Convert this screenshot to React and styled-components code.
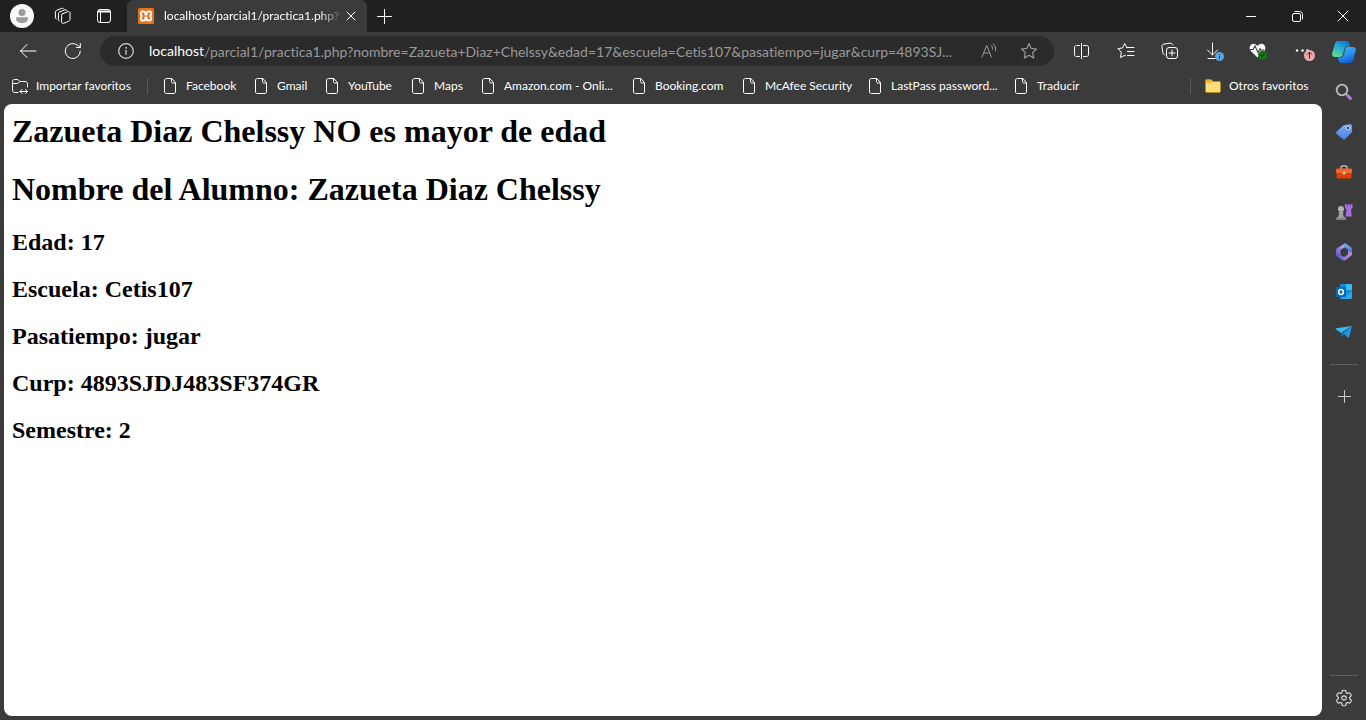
import React from 'react';
import styled, { createGlobalStyle, css } from 'styled-components';

const GlobalStyle = createGlobalStyle`
  * { box-sizing: border-box; }
  body { margin: 0; background: #3b3b3b; }
  button { font: inherit; color: inherit; background: none; border: 0; padding: 0; }
  svg { display: block; flex: none; }
`;

const uiFont = css`
  font-family: "Segoe UI", Lato, "Open Sans", sans-serif;
  font-variant-ligatures: none;
  font-size: 12px;
  line-height: 16px;
`;

const Browser = styled.div`
  ${uiFont}
  display: flex;
  flex-direction: column;
  min-height: 100vh;
  color: #fff;
`;

const TabStrip = styled.header`
  display: flex;
  align-items: center;
  height: 32px;
  padding-left: 2px;
  background: #202020;
`;

const StripTools = styled.div`
  display: flex;
  gap: 1px;
  margin-right: 3px;
`;

const IconButton = styled.button`
  display: flex;
  align-items: center;
  justify-content: center;
  flex: none;
  width: ${(p) => p.$w || 40}px;
  height: ${(p) => p.$h || 32}px;
`;

const Tab = styled.div`
  display: flex;
  align-items: center;
  width: 240px;
  height: 32px;
  padding: 0 4px 0 11px;
  background: #3b3b3b;
  border-radius: 6px 6px 0 0;
`;

const TabTitle = styled.button`
  display: flex;
  align-items: center;
  gap: 10px;
  flex: 1;
  min-width: 0;
  text-align: left;
`;

const FadedText = styled.span`
  flex: 1;
  white-space: nowrap;
  mask-image: linear-gradient(to right, #000 88%, rgba(0, 0, 0, 0.2) 100%);
`;

const WindowControls = styled.div`
  display: flex;
  margin-left: auto;
`;

const Body = styled.div`
  display: flex;
  flex: 1;
`;

const Main = styled.div`
  display: flex;
  flex-direction: column;
  flex: 1;
  min-width: 0;
  padding: 0 0 4px 4px;
`;

const Toolbar = styled.div`
  display: flex;
  align-items: center;
  height: 38px;
  padding: 0 2px 0 1px;
`;

const AddressBar = styled.div`
  display: flex;
  align-items: center;
  flex: 1;
  min-width: 0;
  height: 30px;
  margin: 0 10px 0 5px;
  padding: 0 5px 0 6px;
  border-radius: 15px;
  background: #2b2b2b;
  font-size: 14px;
`;

const Host = styled.label`
  margin-left: 3px;
`;

const UrlInput = styled.input`
  flex: 1;
  min-width: 0;
  height: 24px;
  padding: 0;
  border: 0;
  outline: 0;
  background: none;
  color: #999;
  font: inherit;
  font-variant-ligatures: none;
`;

const ToolbarActions = styled.div`
  display: flex;
  gap: 8px;
`;

const BookmarksBar = styled.nav`
  display: flex;
  align-items: center;
  height: 34px;
  padding: 0 14px 2px 8px;
`;

const Bookmark = styled.a`
  display: flex;
  align-items: center;
  gap: 8px;
  margin-right: 18px;
  color: #fff;
  text-decoration: none;
  white-space: nowrap;
`;

const BookmarkLabel = styled.span`
  width: ${(p) => p.$w}px;
`;

const ImportLink = styled(Bookmark)`
  margin-right: 16px;
`;

const OtherLink = styled(Bookmark)`
  margin: 0;
`;

const BarDivider = styled.span`
  width: 1px;
  height: 16px;
  margin-right: ${(p) => p.$gap}px;
  margin-left: ${(p) => (p.$push ? 'auto' : '0')};
  background: #5a5a5a;
`;

const Page = styled.main`
  flex: 1;
  padding: 9px 8px;
  border-radius: 8px;
  background: #fff;
  color: #000;
  font-family: "Liberation Serif", "Times New Roman", serif;
`;

const Title = styled.h1`
  margin: 0 0 21px;
  font-size: 32px;
  line-height: 37px;
`;

const Detail = styled.h2`
  margin: 0 0 20px;
  font-size: 24px;
  line-height: 27px;
`;

const Sidebar = styled.aside`
  display: flex;
  flex-direction: column;
  align-items: center;
  flex: none;
  width: 44px;
  padding-bottom: 2px;
`;

const SideDivider = styled.hr`
  width: 28px;
  height: 1px;
  margin: ${(p) => (p.$bottom ? 'auto 0 2px' : '12px 0 11px')};
  border: 0;
  background: #5f5f5f;
`;

const Line = ({ w = 16, h = 16, color = '#fff', sw = 1, children }) => (
  <svg width={w} height={h} viewBox={`0 0 ${w} ${h}`} fill="none" stroke={color} strokeWidth={sw} strokeLinecap="round" strokeLinejoin="round" aria-hidden="true">
    {children}
  </svg>
);

const ProfileIcon = () => (
  <svg width="24" height="24" viewBox="0 0 24 24" aria-hidden="true">
    <circle cx="12" cy="12" r="12" fill="#f8f8f8" />
    <circle cx="12" cy="8.5" r="3.5" fill="#9b9b9b" />
    <path d="M6 14.500c0-.8.6-1.200 1.400-1.200h9.200c.8 0 1.400.4 1.400 1.200 0 3-2.600 4.500-6 4.500s-6-1.500-6-4.500z" fill="#9b9b9b" />
  </svg>
);

const WorkspacesIcon = () => (
  <Line w={18} h={18}>
    <path d="M8.200 6.900 13.800 4.700c1.200-.5 2.200.2 2.200 1.400v6.200c0 .9-.5 1.600-1.300 2L9.600 16.300c-1.100.4-2-.2-2-1.400V8.200c0-.6.200-1.100.6-1.300z" />
    <path d="M5.300 13.800c-.6 0-.9-.5-.9-1.200V6.800c0-.9.500-1.600 1.300-1.900l5.300-2.100c.9-.3 1.600 0 1.900.7" />
    <path d="M2.300 12c-.6-.1-.9-.5-.9-1.200V5.200c0-.9.500-1.600 1.300-1.900L7.800 1.300c.9-.3 1.600 0 1.900.7" />
  </Line>
);

const TabActionsIcon = () => (
  <Line w={16} h={16}>
    <rect x="1.500" y="1.500" width="13" height="13" rx="2.500" />
    <path d="M4.500 4.500v10" />
    <path d="M2.500 3.500h11" strokeWidth="2" />
  </Line>
);

const XamppIcon = () => (
  <svg width="16" height="16" viewBox="0 0 16 16" aria-hidden="true">
    <rect width="16" height="16" rx="1.500" fill="#e8711c" />
    <path d="M5.300 3.500H4.400C3.400 3.500 2.900 4.200 2.900 5.300v1c0 .9.400 1.400 1.200 1.700-.8.300-1.200.8-1.200 1.700v1c0 1.100.5 1.800 1.500 1.800h1.500c.9 0 1.400-.6 1.400-1.600V9.300h1.400v1.600c0 1 .5 1.600 1.400 1.600h1.500c1 0 1.500-.7 1.500-1.800v-1c0-.9-.4-1.400-1.200-1.700.8-.3 1.200-.8 1.200-1.700v-1c0-1.100-.5-1.800-1.500-1.800h-1.500c-.9 0-1.400.6-1.400 1.600v1.600H7.300V5.100c0-1-.5-1.600-1.400-1.600z" fill="none" stroke="#fff" strokeWidth="1.800" strokeLinejoin="round" />
  </svg>
);

const CloseIcon = ({ size = 10 }) => (
  <Line w={size} h={size}><path d={`M1 1 ${size - 1} ${size - 1}M${size - 1} 1 1 ${size - 1}`} /></Line>
);

const PlusIcon = ({ size = 15, color }) => (
  <Line w={size} h={size} color={color}><path d={`M${size / 2} .5V${size - 0.5}M.5 ${size / 2}H${size - 0.5}`} /></Line>
);

const MinimizeIcon = () => <Line w={10} h={10}><path d="M.5 5.500h9" /></Line>;

const RestoreIcon = () => (
  <Line w={11} h={11}>
    <rect x=".5" y="2.500" width="8" height="8" rx="1.500" />
    <path d="M3 .5h4.500c1.700 0 3 1.300 3 3V8" />
  </Line>
);

const BackIcon = () => <Line w={18} h={16}><path d="M17 8H1.500M8 1.500 1.500 8 8 14.500" /></Line>;

const ReloadIcon = () => (
  <Line w={18} h={18}>
    <path d="M16.300 9A7.500 7.500 0 1 1 13.500 3.200L16.300 5.500M16.300 1.500v4h-4" />
  </Line>
);

const InfoIcon = () => (
  <Line w={16} h={16} color="#d6d6d6">
    <circle cx="8" cy="8" r="7.300" strokeWidth="1.200" />
    <path d="M8 7.300v4" strokeWidth="1.200" />
    <circle cx="8" cy="4.900" r=".4" />
  </Line>
);

const ReadAloudIcon = () => (
  <Line w={16} h={16} color="#9c9c9c">
    <path d="M1 14 5.700 2.500 10.400 14M2.700 10h6M10 2.300c1.300 1 1.800 2.500 1.500 4M12.200.8c2.200 1.700 3 4.400 2.300 7" />
  </Line>
);

const StarIcon = () => (
  <Line w={18} h={18} color="#9c9c9c" sw={1.2}>
    <path d="M9 1.500 11.200 6.400 16.500 7 12.600 10.600 13.700 16 9 13.300 4.300 16l1.100-5.400L1.500 7l5.300-.6z" />
  </Line>
);

const SplitIcon = () => (
  <Line w={16} h={16}>
    <path d="M7.500.5v15M5.500 2.500h-3c-1 0-2 .6-2 1.700v7.600c0 1 .9 1.700 2 1.700h3M9.500 2.500h3c1 0 2 .6 2 1.700v7.600c0 1-.9 1.700-2 1.700h-3" />
  </Line>
);

const FavoritesIcon = () => (
  <Line w={18} h={18}>
    <path d="M10 5.800 7.700 1.500 5.600 5.900.9 6.700 4.300 10.200 3.500 15.500 7.700 13.300 8.500 13.700M10 5.500h7M10.500 9.500H17M10.500 13.500H17" />
  </Line>
);

const CollectionsIcon = () => (
  <Line w={18} h={18}>
    <rect x="5.500" y="5.500" width="11" height="11" rx="2.500" />
    <path d="M11 8v6M8 11h6M3.800 12.700C2.700 12.500 2 11.800 1.800 10.700L1 4.700C.8 3.300 1.500 2.300 2.800 2.100L9 1.200c1.400-.2 2.500.6 2.800 1.800" />
  </Line>
);

const DownloadIcon = () => (
  <svg width="20" height="20" viewBox="0 0 20 20" fill="none" stroke="#fff" strokeLinecap="round" aria-hidden="true">
    <path d="M8.500 2v12M3.500 9l5 5 5-5M4 17.500h7" />
    <circle cx="15.500" cy="15.500" r="4.500" fill="#5ba7e6" stroke="none" />
    <path d="M15.500 15v3M15.500 13v.1" stroke="#173a58" />
  </svg>
);

const HeartIcon = () => (
  <svg width="18" height="18" viewBox="0 0 18 18" aria-hidden="true">
    <path d="M8.500 15.500 1.800 9C.1 7.200.2 4.500 1.800 2.900S6 1.500 8.500 4c2.500-2.500 5.100-2.700 6.700-1.100s1.700 4.300 0 6.100z" fill="#fff" />
    <path d="M1 7.500h3l2-3.500 3 6.500 2-4 1 1.500h3" fill="none" stroke="#3b3b3b" strokeWidth="1.100" />
    <circle cx="13.500" cy="13" r="4.500" fill="#107c10" />
    <path d="m11.500 13 1.400 1.500 2.600-2.800" fill="none" stroke="#063806" strokeWidth="1.200" />
  </svg>
);

const MoreIcon = () => (
  <svg width="26" height="22" viewBox="0 0 26 22" aria-hidden="true">
    <g fill="#fff"><circle cx="8" cy="10.500" r="1.200" /><circle cx="13.500" cy="10.500" r="1.200" /><circle cx="18.500" cy="10.500" r="1.200" /></g>
    <circle cx="20.500" cy="15.500" r="5.500" fill="#f1a8a8" />
    <path d="M20.500 18.500v-6M18 14.700l2.500-2.500 2.500 2.500" fill="none" stroke="#3c2020" />
  </svg>
);

const ImportIcon = () => (
  <Line w={16} h={16}>
    <path d="M6 14.500H3c-1.400 0-2.500-.9-2.500-2.300V3.500c0-1.200.8-2 2-2h2.700c.6 0 1 .2 1.400.6L8 3.500h5c1.500 0 2.500.9 2.500 2.300V9M.5 5.500h4.800c.5 0 .9-.1 1.200-.5L8 3.500M8 13.500h7.500M10 11.500l-2 2 2 2M13.500 11.500l2 2-2 2" />
  </Line>
);

const FileIcon = () => (
  <Line w={14} h={16}>
    <path d="M7.500.5h-5C1.500.5.500 1.100.500 2v12c0 .9 1 1.500 2 1.500h7.500c.9 0 1.500-.6 1.500-1.500V5zM7.500.5v3c0 1 .5 1.500 1.500 1.500h2.500" />
  </Line>
);

const FolderIcon = () => (
  <svg width="16" height="16" viewBox="0 0 16 16" aria-hidden="true">
    <path d="M.5 3c0-1 .5-1.500 1.500-1.500h4L8 3.500h6c1 0 1.500.5 1.500 1.500v8c0 .9-.6 1.500-1.500 1.500H2c-.9 0-1.500-.6-1.500-1.500z" fill="#ffdc7c" stroke="#b98a1b" />
    <path d="M1 3c0-.6.400-1 1-1h4l1.300 1.500L6 5H1z" fill="#f2b830" />
  </svg>
);

const CopilotIcon = () => (
  <svg width="24" height="24" viewBox="0 0 24 24" aria-hidden="true">
    <defs>
      <linearGradient id="cpA" x1=".8" y1="0" x2=".2" y2="1"><stop offset="0" stopColor="#1273cf" /><stop offset=".45" stopColor="#25a9d2" /><stop offset="1" stopColor="#62dd94" /></linearGradient>
      <linearGradient id="cpB" x1=".7" y1="1" x2=".3" y2="0"><stop offset="0" stopColor="#3cb4f5" /><stop offset=".5" stopColor="#2b8df0" /><stop offset="1" stopColor="#0c58c8" /></linearGradient>
    </defs>
    <path d="M6 1h8c2 0 3 1 3.500 3l.8 2.500H15.500c-1.600 0-2.500.8-3 2.500L10.500 15c-.5 1.500-1.300 2-2.800 2H3c-2.200 0-3.300-1.600-2.800-3.700L3 3.500C3.500 1.800 4.500 1 6 1z" fill="url(#cpA)" />
    <path d="M6 1h8c2 0 3 1 3.500 3l.8 2.500H15.500c-1.600 0-2.500.8-3 2.500L10.500 15c-.5 1.500-1.300 2-2.800 2H3c-2.200 0-3.300-1.600-2.800-3.700L3 3.500C3.500 1.800 4.500 1 6 1z" fill="url(#cpB)" transform="rotate(180 12 12)" />
  </svg>
);

const SearchIcon = () => (
  <svg width="18" height="18" viewBox="0 0 18 18" fill="none" strokeLinecap="round" aria-hidden="true">
    <circle cx="7" cy="7" r="5.300" stroke="#bdbdbd" strokeWidth="1.800" />
    <path d="m11 11 1.500 1.500" stroke="#bdbdbd" strokeWidth="1.500" />
    <path d="m12.800 12.800 2.600 2.600" stroke="#b57be8" strokeWidth="3" />
  </svg>
);

const ShoppingIcon = () => (
  <svg width="18" height="18" viewBox="0 0 18 18" aria-hidden="true">
    <defs><linearGradient id="tag" x1="0" y1="0" x2="0" y2="1"><stop offset="0" stopColor="#7fb0ff" /><stop offset="1" stopColor="#4a80d8" /></linearGradient></defs>
    <path d="M9.500 2 15 1.200c1-.1 1.800.6 1.900 1.600l.2 5.200c0 .7-.2 1.200-.7 1.700l-6.200 6.200c-.8.8-1.800.8-2.600 0L1.700 11c-.8-.8-.8-1.800 0-2.600L8 2.700c.4-.4.900-.6 1.500-.7z" fill="url(#tag)" />
    <circle cx="13" cy="5" r="1.700" fill="#303848" stroke="#d5e4ff" strokeWidth=".8" />
  </svg>
);

const ToolboxIcon = () => (
  <svg width="18" height="18" viewBox="0 0 18 18" aria-hidden="true">
    <path d="M6 6V4.500C6 3.700 6.500 3 7.500 3h3c1 0 1.500.7 1.500 1.500V6" fill="none" stroke="#b9b9b9" strokeWidth="1.500" />
    <rect x="1" y="5.500" width="16" height="5" rx="1.500" fill="#f8672a" />
    <path d="M1.500 10h15v4c0 .9-.6 1.500-1.500 1.500H3c-.9 0-1.500-.6-1.500-1.500z" fill="#dd4109" />
    <circle cx="9" cy="10" r="1.600" fill="#c9c9c9" />
  </svg>
);

const GamesIcon = () => (
  <svg width="18" height="18" viewBox="0 0 18 18" aria-hidden="true">
    <path d="M10 1h1.800v1.500H13V1h1.500v1.500h1.200V1h1.800v4L16 6.500l.8 7H10.500l1.200-7L10 5z" fill="#a86be0" />
    <circle cx="6" cy="6" r="3" fill="#b4b4b4" />
    <path d="M3.500 9h5v1.300H7.800l.8 3.200 1.900 1.200v1.500c0 .5-.3.800-.8.800H2.300c-.5 0-.8-.3-.8-.8v-1.500l1.900-1.200.8-3.200h-.7z" fill="#a0a0a0" />
    <path d="M.8 15h10.400v1.200c0 .5-.3.800-.8.800H1.600c-.5 0-.8-.3-.8-.8z" fill="#828282" />
  </svg>
);

const M365Icon = () => (
  <svg width="18" height="18" viewBox="0 0 18 18" aria-hidden="true">
    <defs>
      <linearGradient id="mA" x1="1" y1="0" x2="0" y2="1"><stop offset="0" stopColor="#d9b8fa" /><stop offset="1" stopColor="#5c49c9" /></linearGradient>
      <linearGradient id="mB" x1="0" y1="0" x2="1" y2="0"><stop offset="0" stopColor="#4f64d8" /><stop offset="1" stopColor="#c98be0" /></linearGradient>
      <linearGradient id="mC" x1="0" y1="0" x2="0" y2="1"><stop offset="0" stopColor="#7ab2f8" /><stop offset="1" stopColor="#3f58b8" /></linearGradient>
    </defs>
    <path d="M10 .5 2.500 4.700C1.500 5.300 1 6 1 7v5.500c0 1 1.200 1.300 2.200.8l2.300-1.300V8c0-.8.3-1.300 1-1.700L11 3.500z" fill="url(#mA)" />
    <path d="M9 1c.8-.6 1.600-.5 2.400 0l4.300 3.100c.9.500 1.300 1.200 1.300 2.200v5.200l-4-2.300V7.600c0-.8-.3-1.400-1-1.800L8.300 3.600z" fill="url(#mC)" />
    <path d="M17 9.500v1c0 1.300-.4 2-1.300 2.600l-5 3.800c-1.100.7-2.200.7-3.300 0l-5-3.500 3.200-1.500 2.400 1.500c.7.400 1.300.4 2 0l3-2.200V8z" fill="url(#mB)" />
  </svg>
);

const OutlookIcon = () => (
  <svg width="18" height="18" viewBox="0 0 18 18" aria-hidden="true">
    <path d="M5 2.500C5 1.600 5.600 1 6.500 1h9c.9 0 1.500.6 1.500 1.500v12c0 .9-.6 1.500-1.500 1.500h-10z" fill="#1490df" />
    <path d="M11 1h4.500c.9 0 1.500.6 1.500 1.500V7h-6z" fill="#38bdf0" />
    <path d="m5 16 12-7v5.500c0 .9-.6 1.500-1.500 1.500z" fill="#28a8ea" />
    <rect x="1" y="4" width="10" height="10" rx="1" fill="#0669bc" />
    <ellipse cx="6" cy="9" rx="2.300" ry="2.500" fill="none" stroke="#fff" strokeWidth="1.400" />
  </svg>
);

const DropIcon = () => (
  <svg width="18" height="18" viewBox="0 0 18 18" aria-hidden="true">
    <path d="M17 3 1 5.200c-.6.100-.7.700-.2 1L6 10z" fill="#39b8f2" />
    <path d="m17 3-11 7 .5 4.500L9 11.800z" fill="#0e6fb8" />
    <path d="m17 3-8.500 7.500 4.500 4c.5.400 1 .3 1.200-.3z" fill="#2099dc" />
  </svg>
);

const GearIcon = () => (
  <Line w={18} h={18} color="#d8d8d8" sw={1.2}>
    <path d="M7.300 1.500c1.100-.3 2.300-.3 3.400 0l.5 2.100c.2.600.8 1 1.500.8l2-.6c.8.800 1.400 1.800 1.700 2.900L14.900 8.200c-.5.400-.5 1.200 0 1.600l1.500 1.500c-.3 1.100-.9 2.100-1.700 2.900l-2-.6c-.7-.2-1.300.2-1.500.8l-.5 2.100c-1.100.3-2.300.3-3.400 0l-.5-2.100c-.2-.6-.8-1-1.500-.8l-2 .6c-.8-.8-1.400-1.800-1.700-2.900l1.500-1.500c.5-.4.5-1.200 0-1.600L1.600 6.700c.3-1.100.9-2.100 1.700-2.900l2 .6c.7.200 1.300-.2 1.500-.8z" />
    <circle cx="9" cy="9" r="2.200" />
  </Line>
);

const bookmarks = [
  ['Facebook', 51], ['Gmail', 31], ['YouTube', 46], ['Maps', 30], ['Amazon.com - Onli...', 111],
  ['Booking.com', 70], ['McAfee Security', 86], ['LastPass password...', 106], ['Traducir', 43],
];

const actions = [
  ['Pantalla dividida', SplitIcon], ['Favoritos', FavoritesIcon], ['Colecciones', CollectionsIcon],
  ['Descargas', DownloadIcon], ['Rendimiento', HeartIcon], ['Más', MoreIcon],
];

const sideApps = [
  ['Buscar', SearchIcon], ['Compras', ShoppingIcon], ['Herramientas', ToolboxIcon], ['Juegos', GamesIcon],
  ['Microsoft 365', M365Icon], ['Outlook', OutlookIcon], ['Drop', DropIcon],
];

const details = ['Edad: 17', 'Escuela: Cetis107', 'Pasatiempo: jugar', 'Curp: 4893SJDJ483SF374GR', 'Semestre: 2'];

export default function App() {
  return (
    <Browser>
      <GlobalStyle />
      <TabStrip>
        <StripTools>
          <IconButton aria-label="Perfil"><ProfileIcon /></IconButton>
          <IconButton aria-label="Áreas de trabajo"><WorkspacesIcon /></IconButton>
          <IconButton aria-label="Acciones de pestaña"><TabActionsIcon /></IconButton>
        </StripTools>
        <Tab>
          <TabTitle>
            <XamppIcon />
            <FadedText>localhost/parcial1/practica1.php?</FadedText>
          </TabTitle>
          <IconButton $w={24} $h={24} aria-label="Cerrar pestaña"><CloseIcon /></IconButton>
        </Tab>
        <IconButton $w={34} aria-label="Nueva pestaña"><PlusIcon /></IconButton>
        <WindowControls>
          <IconButton $w={46} aria-label="Minimizar"><MinimizeIcon /></IconButton>
          <IconButton $w={46} aria-label="Restaurar"><RestoreIcon /></IconButton>
          <IconButton $w={46} aria-label="Cerrar"><CloseIcon size={12} /></IconButton>
        </WindowControls>
      </TabStrip>
      <Body>
        <Main>
          <Toolbar>
            <IconButton $w={45} aria-label="Atrás"><BackIcon /></IconButton>
            <IconButton $w={45} aria-label="Actualizar"><ReloadIcon /></IconButton>
            <AddressBar>
              <IconButton aria-label="Información del sitio"><InfoIcon /></IconButton>
              <Host htmlFor="url">localhost</Host>
              <UrlInput id="url" type="text" defaultValue="/parcial1/practica1.php?nombre=Zazueta+Diaz+Chelssy&edad=17&escuela=Cetis107&pasatiempo=jugar&curp=4893SJ..." />
              <IconButton aria-label="Leer en voz alta"><ReadAloudIcon /></IconButton>
              <IconButton aria-label="Agregar a favoritos"><StarIcon /></IconButton>
            </AddressBar>
            <ToolbarActions>
              {actions.map(([name, Icon]) => (
                <IconButton key={name} $w={36} aria-label={name}><Icon /></IconButton>
              ))}
            </ToolbarActions>
          </Toolbar>
          <BookmarksBar>
            <ImportLink href="#importar"><ImportIcon /><BookmarkLabel $w={95}>Importar favoritos</BookmarkLabel></ImportLink>
            <BarDivider $gap={16} />
            {bookmarks.map(([name, w]) => (
              <Bookmark key={name} href="#favorito"><FileIcon /><BookmarkLabel $w={w}>{name}</BookmarkLabel></Bookmark>
            ))}
            <BarDivider $gap={14} $push />
            <OtherLink href="#otros"><FolderIcon /><BookmarkLabel $w={79}>Otros favoritos</BookmarkLabel></OtherLink>
          </BookmarksBar>
          <Page>
            <Title>Zazueta Diaz Chelssy NO es mayor de edad</Title>
            <Title>Nombre del Alumno: Zazueta Diaz Chelssy</Title>
            {details.map((text) => <Detail key={text}>{text}</Detail>)}
          </Page>
        </Main>
        <Sidebar>
          <IconButton $h={40} aria-label="Copilot"><CopilotIcon /></IconButton>
          {sideApps.map(([name, Icon]) => (
            <IconButton key={name} $h={40} aria-label={name}><Icon /></IconButton>
          ))}
          <SideDivider />
          <IconButton $h={40} aria-label="Personalizar"><PlusIcon size={13} color="#c8c8c8" /></IconButton>
          <SideDivider $bottom />
          <IconButton $h={40} aria-label="Configuración"><GearIcon /></IconButton>
        </Sidebar>
      </Body>
    </Browser>
  );
}
